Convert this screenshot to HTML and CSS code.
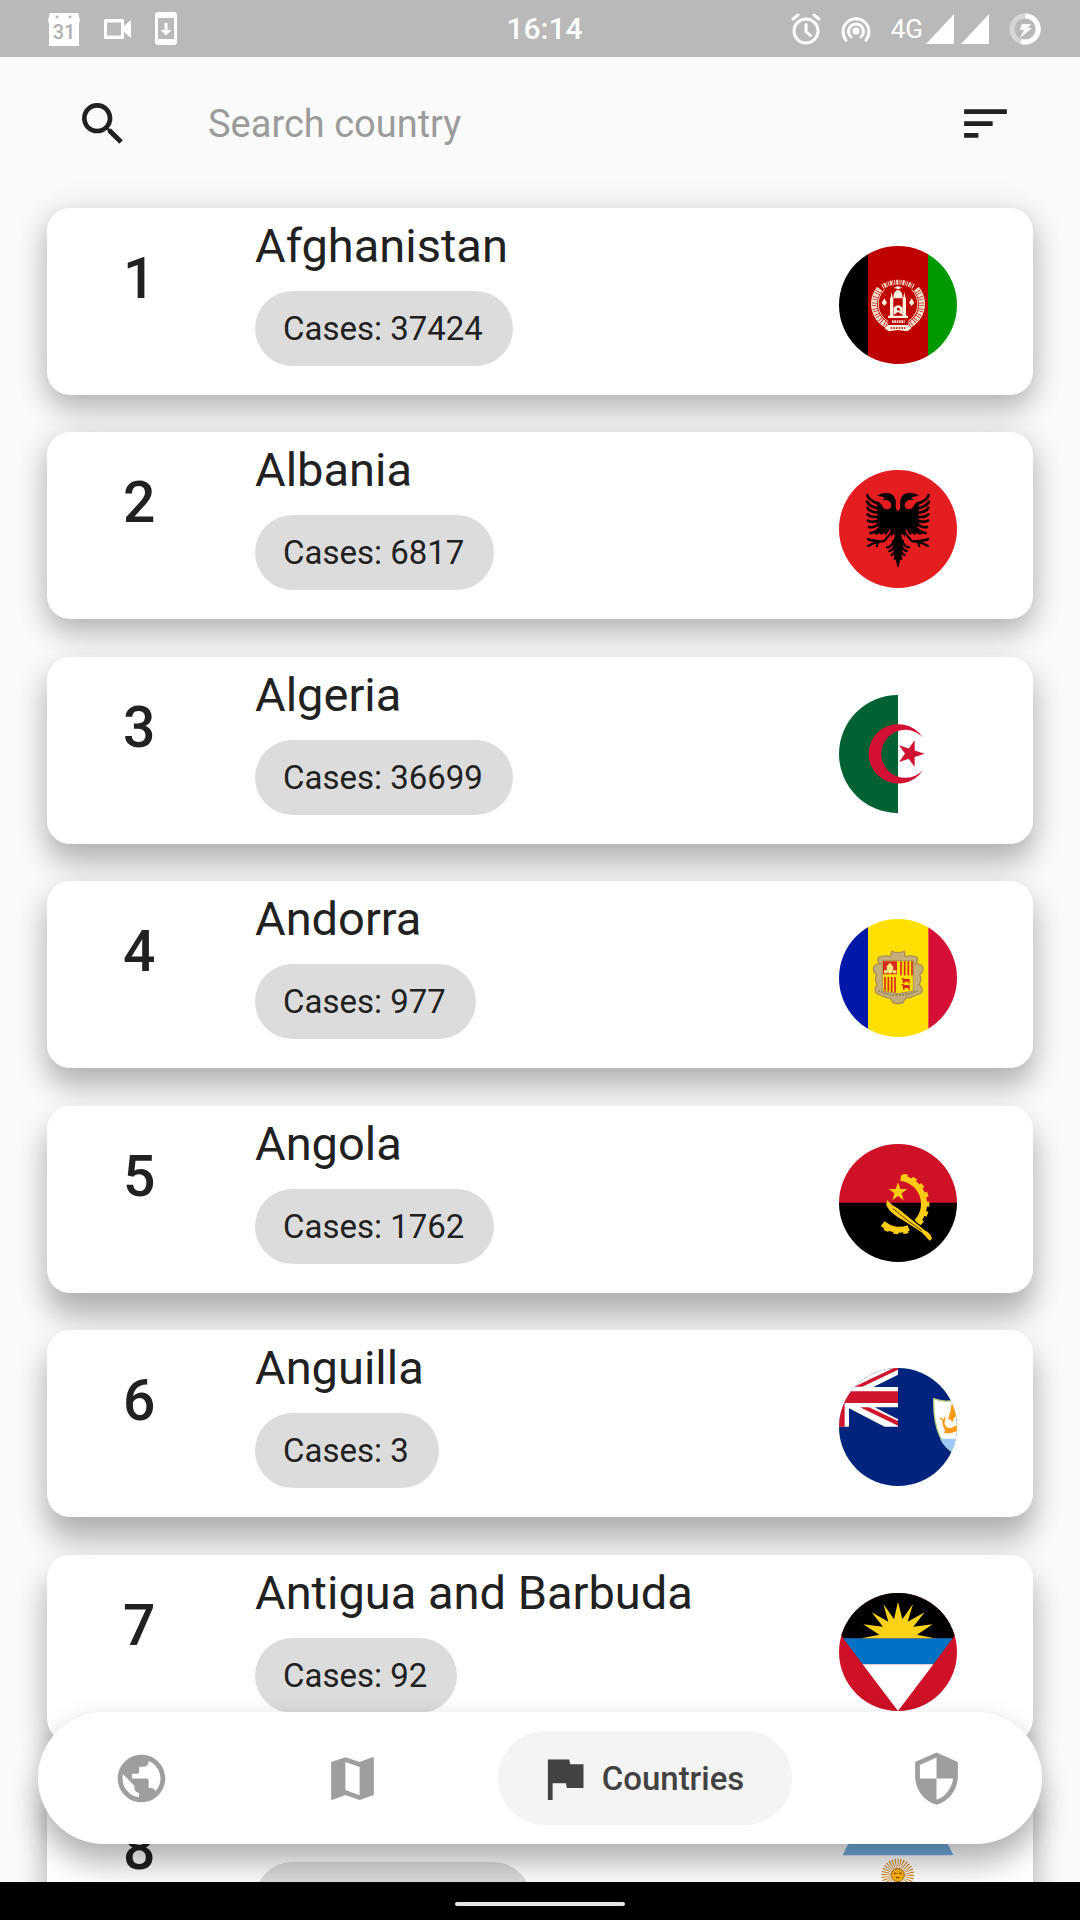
FILE: index.html
```html
<!DOCTYPE html>
<html lang="en">
<head>
<meta charset="utf-8">
<meta name="viewport" content="width=device-width, initial-scale=1">
<title>Countries</title>
<link rel="stylesheet" href="styles.css">
</head>
<body>
<div class="app">
  <header class="status">
    <div class="status-side status-left">
      <svg width="32" height="34" viewBox="0 0 32 34" aria-hidden="true"><path fill="#fff" fill-rule="evenodd" d="M3 1h26q2 0 2 4l1 3-1 4v22H1V12L0 8l1-3q0-4 2-4zm6 2.500a1.500 1.500 0 1 0 .1 0zm13 0a1.500 1.500 0 1 0 .1 0z"/><text x="16" y="27" class="cal-day">31</text></svg>
      <svg width="27" height="20" viewBox="0 0 27 20" aria-hidden="true"><path fill="#fff" fill-rule="evenodd" d="M1.500 0h17q1.500 0 1.500 1.500V7l7-6v18l-7-6v5.500q0 1.500-1.500 1.500h-17Q0 20 0 18.500v-17Q0 0 1.500 0zM3 3.500v13h14v-13z"/></svg>
      <svg width="22" height="33" viewBox="0 0 22 33" aria-hidden="true"><path fill="#fff" fill-rule="evenodd" d="M3 0h16q3 0 3 3v27q0 3-3 3H3q-3 0-3-3V3q0-3 3-3zm0 6v21h16V6zm6.500 5h3v7h4L11 23.500 5.500 18h4z"/></svg>
    </div>
    <time class="clock">16:14</time>
    <div class="status-side status-right">
      <svg width="30" height="32" viewBox="0 0 30 32" fill="none" stroke="#fff" stroke-width="3" stroke-linecap="round" aria-hidden="true"><circle cx="15" cy="18" r="12"/><path d="M2 6l5-4M28 6l-5-4M15 11.500v7l4.500 4"/></svg>
      <svg width="30" height="28" viewBox="0 0 30 28" fill="none" stroke="#fff" stroke-width="3" stroke-linecap="round" aria-hidden="true"><circle cx="15" cy="16" r="2" fill="#fff"/><path d="M5 25A13 13 0 1 1 25 25M10 22A7.500 7.500 0 1 1 20 22"/></svg>
      <div class="network">
        <span class="network-type">4G</span>
        <svg width="63" height="30" viewBox="0 0 63 30" aria-hidden="true"><path fill="#fff" d="M28 0v30H0zM63 0v30H35z"/></svg>
      </div>
      <svg width="32" height="32" viewBox="0 0 32 32" aria-hidden="true"><circle cx="16" cy="16" r="13" fill="none" stroke="#d6d6d6" stroke-width="5"/><path d="M16 3a13 13 0 1 1-4 25.300" fill="none" stroke="#fff" stroke-width="5"/><path fill="#fff" d="M13 11h9l-3 4h4L11 25l4-8h-4z"/></svg>
    </div>
  </header>

  <form class="search" role="search">
    <button type="submit" class="icon-button" aria-label="Search"><svg class="icon-search" viewBox="0 0 24 24" aria-hidden="true"><path d="M15.500 14h-.79l-.28-.27A6.471 6.471 0 0 0 16 9.500 6.500 6.500 0 1 0 9.500 16c1.610 0 3.090-.59 4.230-1.570l.27.28v.79l5 4.990L20.490 19l-4.990-5zm-6 0C7.010 14 5 11.990 5 9.500S7.010 5 9.500 5 14 7.010 14 9.500 11.990 14 9.500 14z"/></svg></button>
    <input class="search-field" type="text" placeholder="Search country" aria-label="Search country">
    <button type="button" class="icon-button" aria-label="Sort"><svg class="icon" viewBox="0 0 24 24" aria-hidden="true"><path d="M3 18h6v-2H3v2zM3 6v2h18V6H3zm0 7h12v-2H3v2z"/></svg></button>
  </form>

  <main class="content">
    <ol class="countries">
      <li class="card">
        <span class="rank">1</span>
        <div class="details"><h2 class="name">Afghanistan</h2><span class="cases">Cases: 37424</span></div>
        <svg class="flag" viewBox="117 77 354 354" role="img" aria-label="Flag of Afghanistan">
          <path d="M117 77h88v354h-88z"/><path fill="#be0000" d="M204 77h181v354H204z"/><path fill="#090" d="M384 77h88v354h-88z"/>
          <g fill="none" stroke="#f6dcc8">
            <path stroke-width="17" stroke-dasharray="9 2 5 2" d="M240 206A70 70 0 0 0 262 315M348 206A70 70 0 0 1 326 315"/>
            <path stroke-width="3" d="M232 200A81 81 0 0 0 258 322M356 200A81 81 0 0 1 330 322M253 208A60 60 0 0 0 264 303M335 208A60 60 0 0 1 324 303"/>
            <path stroke-width="15" stroke-dasharray="3 3 6 2 2 3" d="M247 199Q294 172 341 199"/>
            <path stroke-width="8" stroke-dasharray="5 2" d="M276 304h38"/>
          </g>
          <g fill="#fff0df"><path d="M264 286h60v7h-60zM270 232h10v54h-10zM308 232h10v54h-10zM280 234q0-22 14-26 14 4 14 26zM272 232l3-18 3 18zm38 0 3-18 3 18zM264 314h60l10 10-12 9-28-4-28 4-12-9zM245 247l8-13 8 13-8 10zM327 247l8-13 8 13-8 10zM282 202l12-5 12 5-12 5z"/><path d="M281 284v-22q13-14 27 0v22l-14-9z"/></g>
          <path stroke="#be0000" stroke-width="4" stroke-dasharray="5 3" d="M272 323h44"/><path fill="#be0000" d="M284 240h22v4h-22zM291 263q8-4 10 8l-10-2z"/>
        </svg>
      </li>
      <li class="card">
        <span class="rank">2</span>
        <div class="details"><h2 class="name">Albania</h2><span class="cases">Cases: 6817</span></div>
        <svg class="flag" viewBox="117 62 354 354" role="img" aria-label="Flag of Albania">
          <path fill="#e41e20" d="M117 62h354v354H117z"/>
          <g id="eagle-half">
            <path d="M294 186Q287 182 287 170q1-9 0-17-4-19-23-22-16-1-23 3l-10 5 17 3 8 5-12 4 17 1q11 4 13 12 1 15-13 16-12-2-16-14-6-7-14-10 1 5 1 10l1 65q18 9 37 8l5 30 9 50 9 35h1z"/>
            <path fill="none" stroke="#000" stroke-width="8" stroke-linecap="round" d="M202 138q3 14 34 26M201 157q7 15 34 20M203 176q6 13 34 14M203 195q10 11 36 7M204 214q14 8 36-2M207 233q17 4 34-14M212 251q18-2 36-24M228 252q14-4 24-22M244 252q10-6 14-20M257 252q7-6 9-18"/>
            <path fill="none" stroke="#000" stroke-width="6" stroke-linecap="round" d="M280 242l-27 33q-18 2-50-6M251 276q-23 1-47 14M225 276l-20-5M234 280l-4 11"/>
            <path fill="none" stroke="#000" stroke-width="7" stroke-linecap="round" d="M282 272q-7 22-21 22M285 286q-5 16-17 19M288 300q-5 14-13 17M291 314l-7 14"/>
          </g>
          <use href="#eagle-half" transform="matrix(-1 0 0 1 588 0)"/>
          <path fill="#e41e20" d="M276 258l9-5-3 17-12 7zM312 258l-9-5 3 17 12 7z"/>
        </svg>
      </li>
      <li class="card">
        <span class="rank">3</span>
        <div class="details"><h2 class="name">Algeria</h2><span class="cases">Cases: 36699</span></div>
        <svg class="flag" viewBox="117 74 354 354" role="img" aria-label="Flag of Algeria">
          <path fill="#fff" d="M117 74h354v354H117z"/><path fill="#006233" d="M117 74h177v354H117z"/>
          <path fill="#d21034" d="M370 203A89 89 0 1 0 370 298 72 72 0 1 1 370 203zM374 250l-77 25 47-65v80l-47-65z"/>
        </svg>
      </li>
      <li class="card">
        <span class="rank">4</span>
        <div class="details"><h2 class="name">Andorra</h2><span class="cases">Cases: 977</span></div>
        <svg class="flag" viewBox="117 58 354 354" role="img" aria-label="Flag of Andorra">
          <path fill="#0018a8" d="M117 58h88v354h-88z"/><path fill="#fedf00" d="M204 58h182v354H204z"/><path fill="#d50f35" d="M385 58h87v354h-87z"/>
          <path fill="#c5ae79" stroke="#a98e5c" stroke-width="4" d="M275 155q19 8 38 0l2 16q20-6 36 2 5 11-5 20 15-2 22 9 4 15-9 23 8 15-2 30 14 10 7 25-16 7-35 14-15-1-19 14-16 7-32 0-4-15-19-14-19-7-31-14-7-15 4-25-10-15-2-30-13-8-9-23 7-11 19-9-10-9-4-20 16-8 36-2z"/>
          <path fill="none" stroke="#8f7b56" stroke-width="5" stroke-dasharray="5 4" d="M236 273q18 12 58 14 40-2 58-14"/>
          <path fill="#fedf00" stroke="#a98e5c" stroke-width="3" d="M247 183h93v91q-22 4-46 8-24-4-47-8z"/>
          <path fill="#d52b1e" d="M249 185h42v39h-42z"/><path fill="#ffe680" d="M270 189l10 12-2 17-8 4-9-5-1-17zM252 212h10v9h-10zM279 212h10v9h-10z"/>
          <path stroke="#d52b1e" stroke-width="5" d="M303 185v42M314 185v42M325 185v42M336 185v42M255 232v41M265 232v43M275 232v45M285 232v47"/>
          <path fill="#d52b1e" d="M303 236h7l5 2h14v13h-4v-5h-11v5h-5v-9zM303 254h7l5 2h14v15h-4v-6h-11v5h-5v-10z"/>
        </svg>
      </li>
      <li class="card">
        <span class="rank">5</span>
        <div class="details"><h2 class="name">Angola</h2><span class="cases">Cases: 1762</span></div>
        <svg class="flag" viewBox="117 71 354 354" role="img" aria-label="Flag of Angola">
          <path fill="#ce1126" d="M117 71h354v177H117z"/><path d="M117 247h354v178H117z"/>
          <g fill="none" stroke="#ffcb14"><path stroke-width="18" d="M302 173A78 78 0 0 1 350 305M326 323A78 78 0 0 1 248 310"/><path stroke-width="12" stroke-dasharray="15 14" d="M308 166A85 85 0 0 1 350 317M324 332A86 86 0 0 1 245 317"/></g>
          <path fill="#ffcb14" d="M294 186l7 20h21l-17 13 6 21-17-13-17 13 6-21-17-13h21zM262 239q12 16 31 25l80 65q20 10 23 26l-7 6-24-25-57-37q-37-20-48-42-4-8 2-18z"/>
          <path fill="none" stroke="#000" stroke-width="2" d="M278 264q46 40 88 67"/>
        </svg>
      </li>
      <li class="card">
        <span class="rank">6</span>
        <div class="details"><h2 class="name">Anguilla</h2><span class="cases">Cases: 3</span></div>
        <svg class="flag" viewBox="117 54 354 354" role="img" aria-label="Flag of Anguilla">
          <path fill="#00247d" d="M117 54h354v354H117z"/>
          <path fill="#fff" d="M117 54h122L294 54v20l-74 37h74v61h-70l70 36v22h-40L147 175v55h-30z"/>
          <path fill="#cf142b" d="M117 124h177v35H134v71h-17zM163 110h24l107-51v-5h-13zM180 172h27l87 41v14zM117 54h46l-30 22h-16z"/>
          <path fill="#fff" stroke="#b5c878" stroke-width="4" d="M401 146q40 15 75 0v172q-78-38-75-172z"/><path fill="#9cc9f2" d="M420 266h51v48q-40-20-51-48z"/>
          <path fill="#ff9a12" d="M455 161q5-4 16-4v42l-8 3-6 15-5-8-8-2q8-20 11-46zM418 202l13 6 5-12q1 17-3 23 6 19 21 14l17-7v17q-18 10-40 6 6-5 2-13-8-14-5-25-9-2-10-9z"/>
        </svg>
      </li>
      <li class="card">
        <span class="rank">7</span>
        <div class="details"><h2 class="name">Antigua and Barbuda</h2><span class="cases">Cases: 92</span></div>
        <svg class="flag" viewBox="117 69 354 354" role="img" aria-label="Flag of Antigua and Barbuda">
          <path fill="#ce1126" d="M117 69h354v354H117z"/><path d="M28 69h532L458 205H130z"/><path fill="#0072c6" d="M130 205h328l-58 78H188z"/><path fill="#fff" d="M188 283h212L294 423z"/>
          <path fill="#fcd116" d="M184 205l54-11-48-31 59 7-34-43 50 28-15-53 32 46 12-53 13 53 32-46-16 53 51-28-34 43 58-7-47 31 53 11z"/>
        </svg>
      </li>
      <li class="card">
        <span class="rank">8</span>
        <div class="details"><h2 class="name">Argentina</h2><span class="cases">Cases: 268574</span></div>
        <svg class="flag" viewBox="117 742 354 354" role="img" aria-label="Flag of Argentina">
          <path fill="#74acdf" d="M117 742h354v115H117zM117 979h354v117H117z"/>
          <circle cx="293" cy="916" r="36" fill="none" stroke="#d08a28" stroke-width="26" stroke-dasharray="3 4"/><circle cx="293" cy="916" r="20" fill="#f6b40e" stroke="#a8600e" stroke-width="3"/><path stroke="#85340a" stroke-width="3" d="M282 911h8M297 911h8M288 924h10"/>
        </svg>
      </li>
    </ol>
    <nav class="tabs" aria-label="Main">
      <button type="button" class="tab" aria-label="World"><svg class="icon" viewBox="0 0 24 24" aria-hidden="true"><path d="M12 2C6.480 2 2 6.480 2 12s4.480 10 10 10 10-4.480 10-10S17.520 2 12 2zm-1 17.930c-3.950-.49-7-3.850-7-7.930 0-.62.080-1.210.21-1.790L9 15v1c0 1.100.9 2 2 2v1.930zm6.900-2.540c-.26-.81-1-1.390-1.900-1.390h-1v-3c0-.55-.45-1-1-1H8v-2h2c.55 0 1-.45 1-1V7h2c1.100 0 2-.9 2-2v-.41c2.930 1.190 5 4.060 5 7.410 0 2.080-.8 3.970-2.100 5.390z"/></svg></button>
      <button type="button" class="tab" aria-label="Map"><svg class="icon" viewBox="0 0 24 24" aria-hidden="true"><path d="M20.500 3l-.16.030L15 5.100 9 3 3.360 4.900c-.21.070-.36.250-.36.480V20.500c0 .28.220.5.500.5l.16-.030L9 18.900l6 2.100 5.640-1.900c.21-.070.360-.25.360-.48V3.500c0-.28-.22-.5-.5-.5zM15 19l-6-2.110V5l6 2.110V19z"/></svg></button>
      <button type="button" class="tab tab-active" aria-current="page"><svg class="icon" viewBox="0 0 24 24" aria-hidden="true"><path d="M14.400 6L14 4H5v17h2v-7h5.600l.4 2h7V6z"/></svg><span>Countries</span></button>
      <button type="button" class="tab" aria-label="Protection"><svg class="icon" viewBox="0 0 24 24" aria-hidden="true"><path d="M12 1L3 5v6c0 5.550 3.840 10.740 9 12 5.160-1.260 9-6.450 9-12V5l-9-4zm0 10.990h7c-.53 4.120-3.280 7.790-7 8.940V12H5V6.300l7-3.110v8.800z"/></svg></button>
    </nav>
  </main>

  <footer class="system-bar"><div class="home-handle"></div></footer>
</div>
</body>
</html>
```
FILE: styles.css
```css
* {
  box-sizing: border-box;
}

body {
  margin: 0;
  font-family: Roboto, "Liberation Sans", sans-serif;
  color: #212121;
  background: #fafafa;
}

button,
input {
  font: inherit;
  color: inherit;
  border: 0;
  padding: 0;
  background: none;
}

svg {
  display: block;
  flex: none;
}

.app {
  display: flex;
  flex-direction: column;
  height: 100vh;
}

/* Status bar */
.status {
  display: grid;
  grid-template-columns: 1fr auto 1fr;
  align-items: center;
  flex: none;
  height: 57px;
  padding: 0 39px 0 48px;
  color: #fff;
  background: #b9b9b9;
}

.status-side {
  display: flex;
  align-items: center;
}

.status-left {
  gap: 24px;
}

.status-right {
  justify-content: flex-end;
  gap: 20px;
}

.cal-day {
  font-size: 20px;
  font-weight: 500;
  text-anchor: middle;
  fill: #b0b0b0;
}

.clock {
  font-size: 30px;
  font-weight: 500;
  line-height: 36px;
}

.network {
  display: flex;
  align-items: center;
  gap: 3px;
}

.network-type {
  font-size: 26px;
  line-height: 32px;
}

/* Search */
.search {
  display: flex;
  align-items: center;
  flex: none;
  padding: 38px 66px 18px 75px;
}

.icon-button {
  flex: none;
}

.icon,
.icon-search {
  width: 57px;
  height: 57px;
  fill: currentColor;
}

.icon-search {
  width: 56px;
  height: 56px;
}

.search-field {
  flex: 1;
  min-width: 0;
  height: 56px;
  margin-left: 77px;
  font-size: 38px;
  outline: 0;
}

.search-field::placeholder {
  color: #9b9b9b;
  opacity: 1;
}

/* Country list */
.content {
  position: relative;
  flex: 1;
  min-height: 0;
}

.countries {
  display: grid;
  grid-auto-rows: 224px 225px;
  align-items: start;
  height: 100%;
  margin: 0;
  padding: 38px 47px 0;
  list-style: none;
  overflow: hidden auto;
  scrollbar-width: none;
}

.card {
  display: flex;
  align-items: flex-start;
  padding: 10px 76px 29px;
  border-radius: 23px;
  background: #fff;
  box-shadow: 0 14px 28px rgba(0, 0, 0, 0.22), 0 4px 36px rgba(0, 0, 0, 0.12);
}

.card:nth-child(n + 3) {
  box-shadow: 0 19px 28px rgba(0, 0, 0, 0.22), 0 8px 36px rgba(0, 0, 0, 0.12);
}

.card:nth-child(n + 5) {
  box-shadow: 0 24px 28px rgba(0, 0, 0, 0.22), 0 12px 36px rgba(0, 0, 0, 0.12);
}

.rank {
  width: 132px;
  padding-top: 28px;
  font-size: 57px;
  font-weight: 500;
  line-height: 66px;
}

.details {
  flex: 1;
  min-width: 0;
}

.name {
  margin: 0 0 17px;
  font-size: 47px;
  font-weight: 400;
  line-height: 56px;
}

.cases {
  display: inline-block;
  padding: 0 30px 0 28px;
  border-radius: 38px;
  font-size: 33px;
  line-height: 75px;
  vertical-align: top;
  background: #dcdcdc;
}

.flag {
  width: 118px;
  height: 118px;
  margin-top: 28px;
  border-radius: 50%;
}

/* Floating tab bar */
.tabs {
  position: absolute;
  right: 38px;
  bottom: 38px;
  left: 38px;
  display: grid;
  grid-template-columns: 207fr 214fr 372fr 211fr;
  align-items: center;
  justify-items: center;
  padding: 19px 0;
  border-radius: 66px;
  background: #fff;
  box-shadow: 0 22px 30px rgba(0, 0, 0, 0.24), 0 6px 28px rgba(0, 0, 0, 0.1);
}

.tab {
  display: flex;
  align-items: center;
  height: 94px;
  color: #9e9e9e;
}

.tab-active {
  gap: 9px;
  padding: 0 48px 0 38px;
  border-radius: 47px;
  font-size: 33px;
  font-weight: 500;
  color: #424242;
  background: #f4f4f4;
}

.system-bar {
  position: relative;
  display: flex;
  align-items: center;
  justify-content: center;
  flex: none;
  height: 38px;
  padding-top: 6px;
  background: #000;
}

.home-handle {
  width: 170px;
  height: 4px;
  border-radius: 2px;
  background: #e8e8e8;
}
```
